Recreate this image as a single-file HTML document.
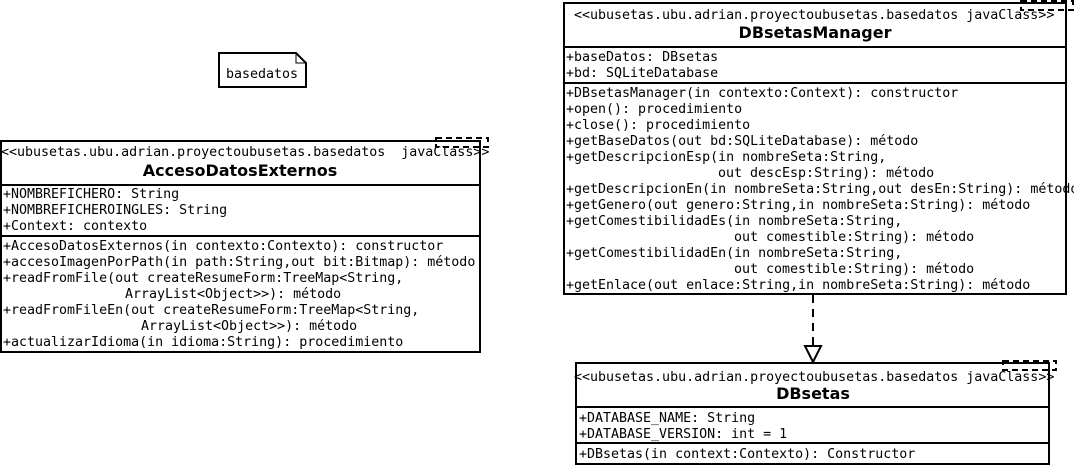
<!DOCTYPE html>
<html><head><meta charset="utf-8"><style>
html,body{margin:0;padding:0;background:#fff;width:1074px;height:465px;overflow:hidden}
svg{display:block}
.m{font-family:"DejaVu Sans Mono","Liberation Mono",monospace;font-size:13.3px;fill:#000}
.t{font-family:"DejaVu Sans","Liberation Sans",sans-serif;font-size:16px;font-weight:bold;fill:#000}
</style></head><body>
<svg width="1074" height="465" xmlns="http://www.w3.org/2000/svg" xml:space="preserve">
<g fill="none" stroke="#000" stroke-width="2">
<path d="M219 53 H296 L306 63 V87 H219 Z"/>
<path d="M296 53 V63 H306" stroke-width="1"/>
<rect x="1" y="141" width="479" height="211"/>
<line x1="1" y1="185" x2="480" y2="185"/>
<line x1="1" y1="236" x2="480" y2="236"/>
<rect x="436" y="138" width="52" height="9" stroke-dasharray="6,4"/>
<rect x="564" y="3" width="502" height="291"/>
<line x1="564" y1="47" x2="1066" y2="47"/>
<line x1="564" y1="83" x2="1066" y2="83"/>
<rect x="1021" y="1" width="52" height="9" stroke-dasharray="6,4"/>
<line x1="813" y1="295" x2="813" y2="346" stroke-dasharray="8,6"/>
<path d="M805 346 H821 L813 362 Z"/>
<rect x="576" y="363" width="473" height="101"/>
<line x1="576" y1="407" x2="1049" y2="407"/>
<line x1="576" y1="443" x2="1049" y2="443"/>
<rect x="1003" y="361" width="53" height="9" stroke-dasharray="6,4"/>
</g>
<text class="m" x="226" y="78">basedatos</text>
<text class="m" x="1" y="156">&lt;&lt;ubusetas.ubu.adrian.proyectoubusetas.basedatos &#160;javaClass&gt;&gt;</text>
<text class="t" x="240" y="176" text-anchor="middle">AccesoDatosExternos</text>
<text class="m" x="3" y="198">+NOMBREFICHERO: String</text>
<text class="m" x="3" y="214">+NOMBREFICHEROINGLES: String</text>
<text class="m" x="3" y="230">+Context: contexto</text>
<text class="m" x="3" y="250">+AccesoDatosExternos(in contexto:Contexto): constructor</text>
<text class="m" x="3" y="266">+accesoImagenPorPath(in path:String,out bit:Bitmap): método</text>
<text class="m" x="3" y="282">+readFromFile(out createResumeForm:TreeMap&lt;String,</text>
<text class="m" x="125" y="298">ArrayList&lt;Object&gt;&gt;): método</text>
<text class="m" x="3" y="314">+readFromFileEn(out createResumeForm:TreeMap&lt;String,</text>
<text class="m" x="141" y="330">ArrayList&lt;Object&gt;&gt;): método</text>
<text class="m" x="3" y="346">+actualizarIdioma(in idioma:String): procedimiento</text>
<text class="m" x="574" y="19">&lt;&lt;ubusetas.ubu.adrian.proyectoubusetas.basedatos javaClass&gt;&gt;</text>
<text class="t" x="815" y="38" text-anchor="middle">DBsetasManager</text>
<text class="m" x="566" y="61">+baseDatos: DBsetas</text>
<text class="m" x="566" y="77">+bd: SQLiteDatabase</text>
<text class="m" x="566" y="97">+DBsetasManager(in contexto:Context): constructor</text>
<text class="m" x="566" y="113">+open(): procedimiento</text>
<text class="m" x="566" y="129">+close(): procedimiento</text>
<text class="m" x="566" y="145">+getBaseDatos(out bd:SQLiteDatabase): método</text>
<text class="m" x="566" y="161">+getDescripcionEsp(in nombreSeta:String,</text>
<text class="m" x="718" y="177">out descEsp:String): método</text>
<text class="m" x="566" y="193">+getDescripcionEn(in nombreSeta:String,out desEn:String): método</text>
<text class="m" x="566" y="209">+getGenero(out genero:String,in nombreSeta:String): método</text>
<text class="m" x="566" y="225">+getComestibilidadEs(in nombreSeta:String,</text>
<text class="m" x="734" y="241">out comestible:String): método</text>
<text class="m" x="566" y="257">+getComestibilidadEn(in nombreSeta:String,</text>
<text class="m" x="734" y="273">out comestible:String): método</text>
<text class="m" x="566" y="289">+getEnlace(out enlace:String,in nombreSeta:String): método</text>
<text class="m" x="574" y="381">&lt;&lt;ubusetas.ubu.adrian.proyectoubusetas.basedatos javaClass&gt;&gt;</text>
<text class="t" x="813" y="399" text-anchor="middle">DBsetas</text>
<text class="m" x="579" y="422">+DATABASE_NAME: String</text>
<text class="m" x="579" y="438">+DATABASE_VERSION: int = 1</text>
<text class="m" x="579" y="458">+DBsetas(in context:Contexto): Constructor</text>
</svg>
</body></html>
